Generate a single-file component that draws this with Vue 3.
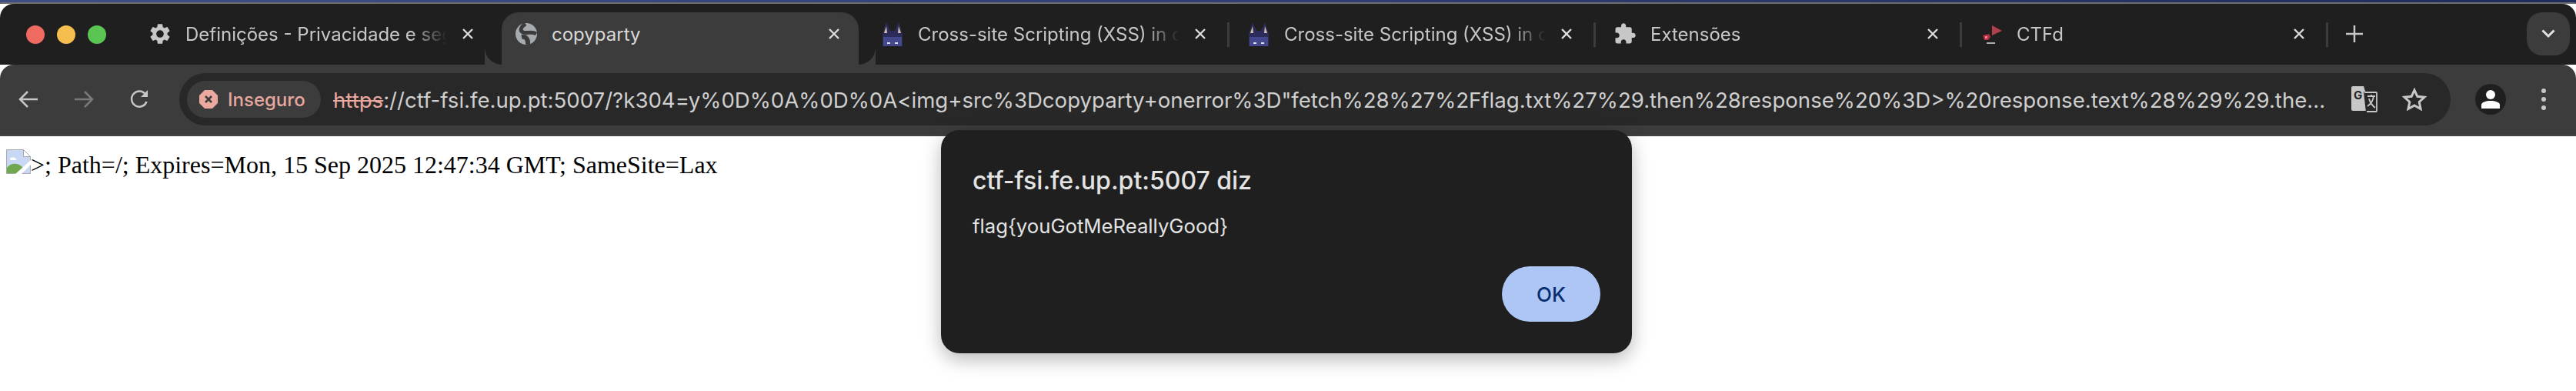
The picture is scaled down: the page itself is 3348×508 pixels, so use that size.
<script setup>
const tabs = [
  { id: 1, title: 'Definições - Privacidade e segurança', icon: 'gear', sep: false },
  { id: 2, title: 'copyparty', icon: 'globe', active: true, sep: false },
  { id: 3, title: 'Cross-site Scripting (XSS) in copyparty', icon: 'cat', sep: true },
  { id: 4, title: 'Cross-site Scripting (XSS) in copyparty', icon: 'cat', sep: true },
  { id: 5, title: 'Extensões', icon: 'puzzle', sep: true },
  { id: 6, title: 'CTFd', icon: 'flag', sep: true },
]
const url = '://ctf-fsi.fe.up.pt:5007/?k304=y%0D%0A%0D%0A<img+src%3Dcopyparty+onerror%3D"fetch%28%27%2Fflag.txt%27%29.then%28response%20%3D>%20response.text%28%29%29.the...'
</script>

<template>
  <div class="screen">
    <div class="desk"></div>
    <div class="strip">
      <div class="lights">
        <span class="light red"></span>
        <span class="light yellow"></span>
        <span class="light green"></span>
      </div>
      <div v-for="t in tabs" :key="t.id" class="tab" :class="{ active: t.active, sep: t.sep }">
        <span class="fav">
          <svg v-if="t.icon === 'gear'" width="32" height="32" viewBox="0 0 24 24"><path fill="#c7c7c7" d="M19.14 12.94c.04-.3.06-.61.06-.94 0-.32-.02-.64-.07-.94l2.03-1.58c.18-.14.23-.41.12-.61l-1.92-3.32c-.12-.22-.37-.29-.59-.22l-2.39.96c-.5-.38-1.03-.7-1.62-.94l-.36-2.54c-.04-.24-.24-.41-.48-.41h-3.84c-.24 0-.43.17-.47.41l-.36 2.54c-.59.24-1.13.57-1.62.94l-2.39-.96c-.22-.08-.47 0-.59.22L2.74 8.87c-.12.21-.08.47.12.61l2.03 1.58c-.05.3-.09.63-.09.94s.02.64.07.94l-2.03 1.58c-.18.14-.23.41-.12.61l1.92 3.32c.12.22.37.29.59.22l2.39-.96c.5.38 1.03.7 1.62.94l.36 2.54c.05.24.24.41.48.41h3.84c.24 0 .44-.17.47-.41l.36-2.54c.59-.24 1.13-.56 1.62-.94l2.39.96c.22.08.47 0 .59-.22l1.92-3.32c.12-.22.07-.47-.12-.61l-2.01-1.58zM12 15.6c-1.98 0-3.6-1.62-3.6-3.6s1.62-3.6 3.6-3.6 3.6 1.62 3.6 3.6-1.62 3.6-3.6 3.6z"/></svg>
          <svg v-else-if="t.icon === 'globe'" width="30" height="30" viewBox="0 0 30 30"><circle cx="15" cy="15" r="14" fill="#a6abb0"/><path fill="none" stroke="#3c3c3c" stroke-width="5" d="M14 2C8 6 6 11 11 13c5 2 11-2 17 2"/><path fill="none" stroke="#3c3c3c" stroke-width="6" d="M9 19c5-1 9 3 8 10"/></svg>
          <svg v-else-if="t.icon === 'cat'" width="28" height="32" viewBox="0 0 28 32"><path fill="#2c2c5c" d="M1 16 6 1l5 11h6l5-11 5 15v16H1z"/><path fill="#d6bea6" d="M3 15 6 6l1 9zM25 15l-3-9-1 9z"/><path fill="#45478c" d="M2 20h24v12H2z"/><path fill="#dfe0ea" d="M7 27h4v2H7zM17 27h4v2h-4z"/></svg>
          <svg v-else-if="t.icon === 'puzzle'" width="30" height="30" viewBox="0 0 24 24"><path fill="#c7c7c7" d="M20.5 11H19V7c0-1.1-.9-2-2-2h-4V3.5C13 2.120 11.880 1 10.500 1S8 2.120 8 3.500V5H4c-1.100 0-1.990.9-1.990 2v3.800H3.500c1.490 0 2.700 1.210 2.700 2.700s-1.210 2.700-2.700 2.700H2V20c0 1.100.9 2 2 2h3.800v-1.500c0-1.490 1.210-2.700 2.700-2.700 1.490 0 2.700 1.210 2.700 2.700V22H17c1.100 0 2-.9 2-2v-4h1.500c1.380 0 2.500-1.120 2.500-2.500S21.880 11 20.500 11z"/></svg>
          <svg v-else width="28" height="32" viewBox="0 0 28 32"><path fill="#b23f4c" d="M15 5l13 7-13 6z"/><path fill="#b5303f" d="M3 18l8-2 2 4-3 4H5z"/><path fill="#e88b96" d="M6 19h3v3H6z"/><path fill="#a8aeaa" d="M8 27h11v2H8z"/></svg>
        </span>
        <span class="title">{{ t.title }}</span>
        <svg class="close" width="18" height="18" viewBox="0 0 18 18"><path d="M3 3l12 12M15 3 3 15" stroke="#dcdcdc" stroke-width="2.400" fill="none"/></svg>
      </div>
      <svg class="plus" width="22" height="22" viewBox="0 0 22 22"><path d="M11 0v22M0 11h22" stroke="#c7c7c7" stroke-width="2.500"/></svg>
      <div class="tabsearch">
        <svg width="18" height="12" viewBox="0 0 18 12"><path d="M1.500 1.500 9 9l7.500-7.500" stroke="#e3e3e3" stroke-width="3" fill="none"/></svg>
      </div>
    </div>

    <div class="toolbar">
      <svg class="nav" width="26" height="24" viewBox="0 0 26 24"><path d="M25 12H2M12 2 2 12l10 10" stroke="#c7c7c7" stroke-width="2.500" fill="none"/></svg>
      <svg class="nav fwd" width="26" height="24" viewBox="0 0 26 24"><path d="M1 12h23M14 2l10 10-10 10" stroke="#7a7a7a" stroke-width="2.500" fill="none"/></svg>
      <svg class="nav reload" width="26" height="26" viewBox="0 0 26 26"><path d="M22.500 16a10 10 0 1 1-1.500-9.500" stroke="#c7c7c7" stroke-width="2.500" fill="none"/><path fill="#c7c7c7" d="M24 1v9h-9z"/></svg>
      <div class="omni">
        <div class="chip">
          <svg width="24" height="24" viewBox="0 0 24 24"><path fill="#eba9a0" d="M7 0h10l7 7v10l-7 7H7l-7-7V7z"/><path d="M8 8l8 8M16 8l-8 8" stroke="#3c3c3c" stroke-width="2.600"/></svg>
          <span>Inseguro</span>
        </div>
        <div class="url"><span class="https">https</span>{{ url }}</div>
        <svg class="translate" width="34" height="34" viewBox="0 0 34 34">
          <path fill="#c7c7c7" d="M2 0h14l10 32H2a2 2 0 0 1-2-2V2a2 2 0 0 1 2-2z"/>
          <text x="3" y="17" class="g">G</text>
          <path fill="#282828" d="M16 7h16a2 2 0 0 1 2 2v23a2 2 0 0 1-2 2H19z"/>
          <path fill="none" stroke="#c7c7c7" stroke-width="1.800" d="M17 8h15a1 1 0 0 1 1 1v23a1 1 0 0 1-1 1H20M21 13h10M26 11v2M29 13c-1 7-5 11-8 13M23 16c1 5 5 10 8 12"/>
        </svg>
        <svg class="star" width="32" height="30" viewBox="0 0 32 30"><path d="M16 3l3.800 8.300 9.200 1-6.800 6.200 1.900 9L16 23l-8.100 4.500 1.900-9L3 12.300l9.200-1z" fill="none" stroke="#c7c7c7" stroke-width="3"/></svg>
      </div>
      <div class="avatar">
        <svg width="26" height="26" viewBox="0 0 26 26"><circle cx="13" cy="7" r="6" fill="#fff"/><path fill="#fff" d="M1 25v-5c0-3 6-5 12-5s12 2 12 5v5z"/></svg>
      </div>
      <div class="dots"><i></i><i></i><i></i></div>
    </div>

    <main class="page">
      <svg class="broken" width="32" height="32" viewBox="0 0 32 32">
        <path d="M.5.5h22l9 9v22H.5z" fill="#c8d8f4" stroke="#a9a9a9"/>
        <path d="M22.500.5v9h9z" fill="#fff" stroke="#a9a9a9"/>
        <path d="M5 13c0-3 6-3 7-1 2 0 2 2 0 2H6c-1 0-1-1-1-1z" fill="#fff"/>
        <path d="M1 31v-7c5-7 15-7 21 0l-8 7z" fill="#6fa84f"/>
        <path d="M12 32 32 14v6L20 32z" fill="#fff"/>
      </svg><span class="cookie">&gt;; Path=/; Expires=Mon, 15 Sep 2025 12:47:34 GMT; SameSite=Lax</span>
    </main>

    <div class="dialog">
      <div class="dtitle">ctf-fsi.fe.up.pt:5007 diz</div>
      <div class="dmsg">flag{youGotMeReallyGood}</div>
      <div class="dactions"><button class="ok">OK</button></div>
    </div>
  </div>
</template>

<style scoped>
.screen {
  position: relative;
  width: 3348px;
  height: 508px;
  overflow: hidden;
  background: #fff;
  font-family: Inter, "Liberation Sans", sans-serif;
}
.desk {
  height: 5px;
  background: linear-gradient(90deg, #3f4f86, #202c5c);
  position: relative;
}
.desk::after {
  content: "";
  position: absolute;
  left: 0;
  right: 0;
  bottom: 0;
  height: 2px;
  background: #6e6e6e;
  border-radius: 16px 16px 0 0;
}
.strip {
  height: 79px;
  background: #1f1f1f;
  display: flex;
  align-items: flex-end;
  position: relative;
  border-radius: 18px 18px 0 0;
  box-sizing: border-box;
}
.lights {
  width: 170px;
  flex: none;
  height: 68px;
  display: flex;
  gap: 16px;
  padding: 17px 0 0 34px;
  box-sizing: border-box;
}
.light { width: 24px; height: 24px; border-radius: 50%; }
.red { background: #ef6b61; }
.yellow { background: #f6bd4f; }
.green { background: #5ac553; }
.tab {
  width: 476px;
  height: 68px;
  flex: none;
  box-sizing: border-box;
  position: relative;
  display: flex;
  align-items: center;
  padding: 0 0 12px 22px;
  color: #c7c7c7;
  font-size: 24px;
}
.tab.sep::after {
  content: "";
  position: absolute;
  right: 0;
  top: 13px;
  height: 32px;
  width: 3px;
  background: #3c3c3c;
}
.tab.active {
  background: #3c3c3c;
  margin: 0 6px;
  width: 464px;
  padding-left: 16px;
  border-radius: 22px 22px 0 0;
  color: #d8d8d8;
}
.tab.active::before,
.tab.active::after {
  content: "";
  position: absolute;
  bottom: 0;
  width: 22px;
  height: 22px;
  background: radial-gradient(circle at 100% 0, transparent 21.500px, #3c3c3c 22px);
  left: -22px;
}
.tab.active::after {
  left: auto;
  right: -22px;
  background: radial-gradient(circle at 0 0, transparent 21.500px, #3c3c3c 22px);
}
.fav {
  width: 32px;
  height: 32px;
  flex: none;
  display: flex;
  align-items: center;
  justify-content: center;
}
.title {
  width: 340px;
  margin-left: 17px;
  flex: none;
  white-space: nowrap;
  overflow: hidden;
  -webkit-mask-image: linear-gradient(90deg, #000 86%, transparent 100%);
  mask-image: linear-gradient(90deg, #000 86%, transparent 100%);
}
.tab.active .title { -webkit-mask-image: none; mask-image: none; }
.close { margin-left: 18px; flex: none; }
.plus { position: absolute; left: 3049px; top: 28px; }
.tabsearch {
  position: absolute;
  left: 3284px;
  top: 11px;
  width: 56px;
  height: 56px;
  border-radius: 20px;
  background: #3c3c3c;
  display: flex;
  align-items: center;
  justify-content: center;
}
.toolbar {
  height: 93px;
  background: #3c3c3c;
  border-radius: 18px 18px 0 0;
  box-sizing: border-box;
  display: flex;
  align-items: center;
  padding: 0 28px 1px 24px;
  border-bottom: 2px solid #404040;
}
.nav { flex: none; }
.fwd { margin-left: 46px; }
.reload { margin-left: 46px; }
.omni {
  margin-left: 39px;
  width: 2952px;
  height: 68px;
  flex: none;
  border-radius: 34px;
  background: #282828;
  display: flex;
  align-items: center;
  padding-left: 10px;
  box-sizing: border-box;
}
.chip {
  width: 174px;
  height: 48px;
  flex: none;
  border-radius: 24px;
  background: #3c3c3c;
  display: flex;
  align-items: center;
  padding-left: 16px;
  gap: 13px;
  box-sizing: border-box;
  color: #e8a79f;
  font-size: 24px;
  font-weight: 500;
}
.url {
  margin-left: 16px;
  width: 2593px;
  flex: none;
  padding-top: 2px;
  white-space: nowrap;
  overflow: hidden;
  font-size: 27.600px;
  color: #cfcfcf;
}
.https { color: #e8a79f; text-decoration: line-through; }
.translate { margin-left: 30px; flex: none; }
.g { font-size: 15px; font-weight: 700; fill: #282828; font-family: Inter, sans-serif; }
.star { margin-left: 32px; flex: none; }
.avatar {
  margin-left: 32px;
  width: 40px;
  height: 40px;
  border-radius: 50%;
  background: #1f1f1f;
  flex: none;
  display: flex;
  align-items: center;
  justify-content: center;
}
.dots {
  margin-left: 46px;
  display: flex;
  flex-direction: column;
  gap: 5px;
}
.dots i { width: 6px; height: 6px; border-radius: 50%; background: #c7c7c7; display: block; }
.page {
  padding: 17px 0 0 8px;
  font-family: "Liberation Serif", serif;
  font-size: 32px;
  color: #000;
  line-height: 37px;
  white-space: nowrap;
}
.broken { vertical-align: -1px; }
.dialog {
  position: absolute;
  left: 1223px;
  top: 169px;
  width: 898px;
  height: 290px;
  box-sizing: border-box;
  padding: 44px 41px 0;
  background: #1f1f1f;
  border-radius: 24px;
  box-shadow: 0 8px 24px rgba(0, 0, 0, .28);
}
.dtitle {
  font-size: 32px;
  font-weight: 500;
  color: #e3e3e3;
  line-height: 44px;
}
.dmsg {
  margin-top: 20px;
  font-size: 25.700px;
  color: #e3e3e3;
  line-height: 34px;
}
.dactions {
  position: absolute;
  right: 41px;
  bottom: 41px;
}
.ok {
  width: 128px;
  height: 72px;
  border: 0;
  border-radius: 36px;
  background: #adc6f5;
  color: #062e6f;
  font-family: inherit;
  font-size: 26px;
  font-weight: 500;
  padding: 0;
}
</style>
